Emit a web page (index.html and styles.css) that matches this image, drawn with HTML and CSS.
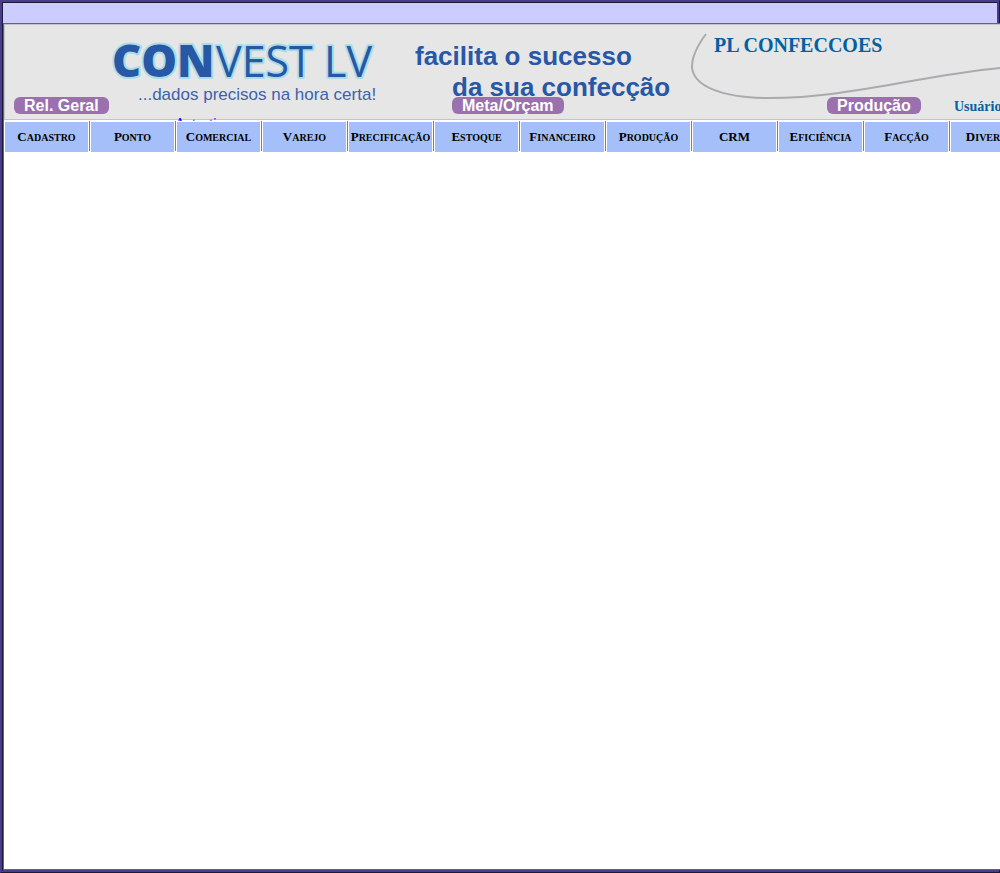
FILE: index.html
```html
<!DOCTYPE html>
<html lang="pt-BR">
<head>
<meta charset="utf-8">
<title>Convest LV</title>
<link rel="stylesheet" href="styles.css">
</head>
<body>
<div class="frame">
  <div class="topbar"></div>
  <div class="content">
    <header class="banner">
      <svg class="art" width="1100" height="94" viewBox="5 25 1100 94" role="img" aria-label="Convest LV">
        <g class="logo">
          <text class="logo-bold" x="112" y="77">CON</text>
          <text class="logo-thin" x="216" y="77">VEST LV</text>
        </g>
        <text class="tagline" x="138" y="100">...dados precisos na hora certa!</text>
        <text class="slogan" x="415" y="65">facilita o sucesso</text>
        <text class="slogan" x="452" y="96">da sua confecção</text>
        <path class="swirl" d="M706 34C697 46 692 56 692 67C693 86 722 98 769 98C847 98 918 76 1000 68C1030 65 1060 63 1105 61"/>
      </svg>
      <h1 class="company">PL CONFECCOES</h1>
      <div class="actions">
        <button type="button" class="pill">Rel. Geral</button>
        <button type="button" class="pill">Meta/Orçam</button>
        <button type="button" class="pill">Produção</button>
        <span class="user">Usuário:</span>
      </div>
      <a class="auth" href="#">Autenticar</a>
    </header>
    <nav>
      <ul class="menu">
        <li><a href="#">Cadastro</a></li>
        <li><a href="#">Ponto</a></li>
        <li><a href="#">Comercial</a></li>
        <li><a href="#">Varejo</a></li>
        <li><a href="#">Precificação</a></li>
        <li><a href="#">Estoque</a></li>
        <li><a href="#">Financeiro</a></li>
        <li><a href="#">Produção</a></li>
        <li><a class="acronym" href="#">CRM</a></li>
        <li><a href="#">Eficiência</a></li>
        <li><a href="#">Facção</a></li>
        <li><a href="#">Diversos</a></li>
      </ul>
    </nav>
  </div>
</div>
</body>
</html>
```
FILE: styles.css
```css
* { box-sizing: border-box; }

body {
  margin: 0;
  overflow: hidden;
  background: #fff;
  font-family: "Liberation Serif", "Times New Roman", serif;
}

.frame {
  display: flex;
  flex-direction: column;
  min-height: 100vh;
  border: 3px ridge #483d8b;
}

.topbar {
  height: 20px;
  background: #ccf;
}

.content {
  flex: 1;
  margin-right: -3px;
  overflow: hidden;
  background: #fff;
  border: 1px solid #566985;
  border-right: 0;
}

.banner {
  position: relative;
  height: 97px;
  overflow: hidden;
}

.art {
  display: block;
  box-sizing: content-box;
  background: #e6e6e6;
  border: 1px solid #c4c4c4;
}

.logo {
  font-family: "Open Sans", sans-serif;
  fill: #2857a5;
  stroke: #a9dde6;
  stroke-width: 4px;
  stroke-linejoin: round;
  paint-order: stroke;
}

.logo-bold {
  font-size: 45px;
  font-weight: 800;
}

.logo-thin {
  font-size: 43px;
  font-weight: 400;
}

.tagline {
  font: 17px "Liberation Sans", Arial, sans-serif;
  fill: #3d62ac;
}

.slogan {
  font: bold 26px "Liberation Sans", Arial, sans-serif;
  fill: #2857a5;
}

.swirl {
  fill: none;
  stroke: #ababae;
  stroke-width: 2;
}

.company {
  position: absolute;
  left: 710px;
  top: 9px;
  margin: 0;
  font-size: 20px;
  line-height: 24px;
  color: #0560a0;
}

.actions {
  position: absolute;
  left: 10px;
  top: 73px;
  display: grid;
  grid-template-columns: 438px 375px 127px auto;
  justify-items: start;
}

.pill {
  height: 17px;
  padding: 0 10px;
  border: 0;
  border-radius: 6px;
  background: #9b70af;
  color: #fff;
  font: bold 16px/17px "Liberation Sans", Arial, sans-serif;
}

.user {
  font-size: 14px;
  font-weight: bold;
  line-height: 20px;
  color: #0560a0;
}

.auth {
  position: absolute;
  left: 171px;
  top: 92px;
  font-size: 14px;
  line-height: 16px;
  color: #00f;
  text-decoration: none;
}

.menu {
  display: flex;
  margin: 0;
  padding: 0;
  list-style: none;
}

.menu li {
  flex: none;
  width: 86px;
  height: 30px;
  padding: 1px 1px 0;
  border-right: 1px solid #5b82d0;
}

.menu a {
  display: block;
  height: 30px;
  background: #a5bffa;
  color: #000;
  font-size: 10px;
  font-weight: bold;
  line-height: 30px;
  text-align: center;
  text-decoration: none;
  text-transform: uppercase;
  white-space: nowrap;
}

.menu a::first-letter,
.menu .acronym {
  font-size: 13px;
}
```
